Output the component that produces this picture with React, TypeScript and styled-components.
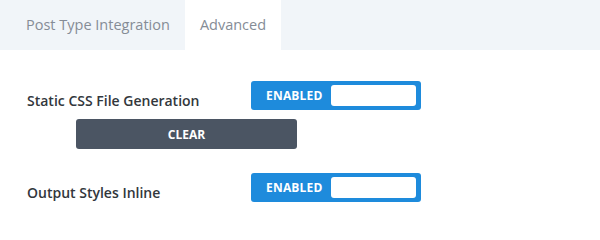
import React from 'react';
import styled, { createGlobalStyle } from 'styled-components';

const GlobalStyle = createGlobalStyle`
  html, body {
    margin: 0;
    padding: 0;
    background: #ffffff;
  }
  body {
    font-family: 'Open Sans', 'Noto Sans', sans-serif;
  }
`;

const Page = styled.div`
  width: 600px;
  height: 219px;
  overflow: hidden;
  background: #ffffff;
`;

const TabBar = styled.div`
  display: flex;
  height: 50px;
  padding-left: 11px;
  background: #f1f5f9;
`;

const Tab = styled.div<{ active?: boolean }>`
  display: flex;
  align-items: center;
  padding: 0 15px 1px;
  font-size: 14.5px;
  color: #858c96;
  background: ${({ active }) => (active ? '#ffffff' : 'transparent')};
`;

const Body = styled.div`
  display: flex;
  flex-direction: column;
  padding: 31px 0 0 27px;
`;

const Row = styled.div`
  display: flex;
  align-items: center;
`;

const Label = styled.div`
  width: 224px;
  padding-top: 10px;
  font-size: 14px;
  font-weight: 600;
  color: #32373c;
`;

const Toggle = styled.div`
  display: flex;
  align-items: center;
  justify-content: space-between;
  box-sizing: border-box;
  width: 170px;
  height: 29px;
  padding: 4px 5px 4px 15px;
  border-radius: 3px;
  background: #1e8bdc;
`;

const ToggleText = styled.span`
  font-size: 12px;
  font-weight: 700;
  color: #ffffff;
  letter-spacing: 0.2px;
`;

const Knob = styled.span`
  width: 85px;
  height: 21px;
  border-radius: 3px;
  background: #ffffff;
`;

const ClearButton = styled.button`
  width: 221px;
  height: 30px;
  margin: 9px 0 0 49px;
  border: none;
  border-radius: 3px;
  background: #4b5563;
  color: #ffffff;
  font-family: 'Open Sans', 'Noto Sans', sans-serif;
  font-size: 12px;
  font-weight: 700;
  cursor: pointer;
`;

const Spacer = styled.div`
  height: 24px;
`;

const SettingToggle: React.FC<{ label: string }> = ({ label }) => (
  <Row>
    <Label>{label}</Label>
    <Toggle>
      <ToggleText>ENABLED</ToggleText>
      <Knob />
    </Toggle>
  </Row>
);

export default function App() {
  return (
    <Page>
      <GlobalStyle />
      <TabBar>
        <Tab>Post Type Integration</Tab>
        <Tab active>Advanced</Tab>
      </TabBar>
      <Body>
        <SettingToggle label="Static CSS File Generation" />
        <ClearButton>CLEAR</ClearButton>
        <Spacer />
        <SettingToggle label="Output Styles Inline" />
      </Body>
    </Page>
  );
}
